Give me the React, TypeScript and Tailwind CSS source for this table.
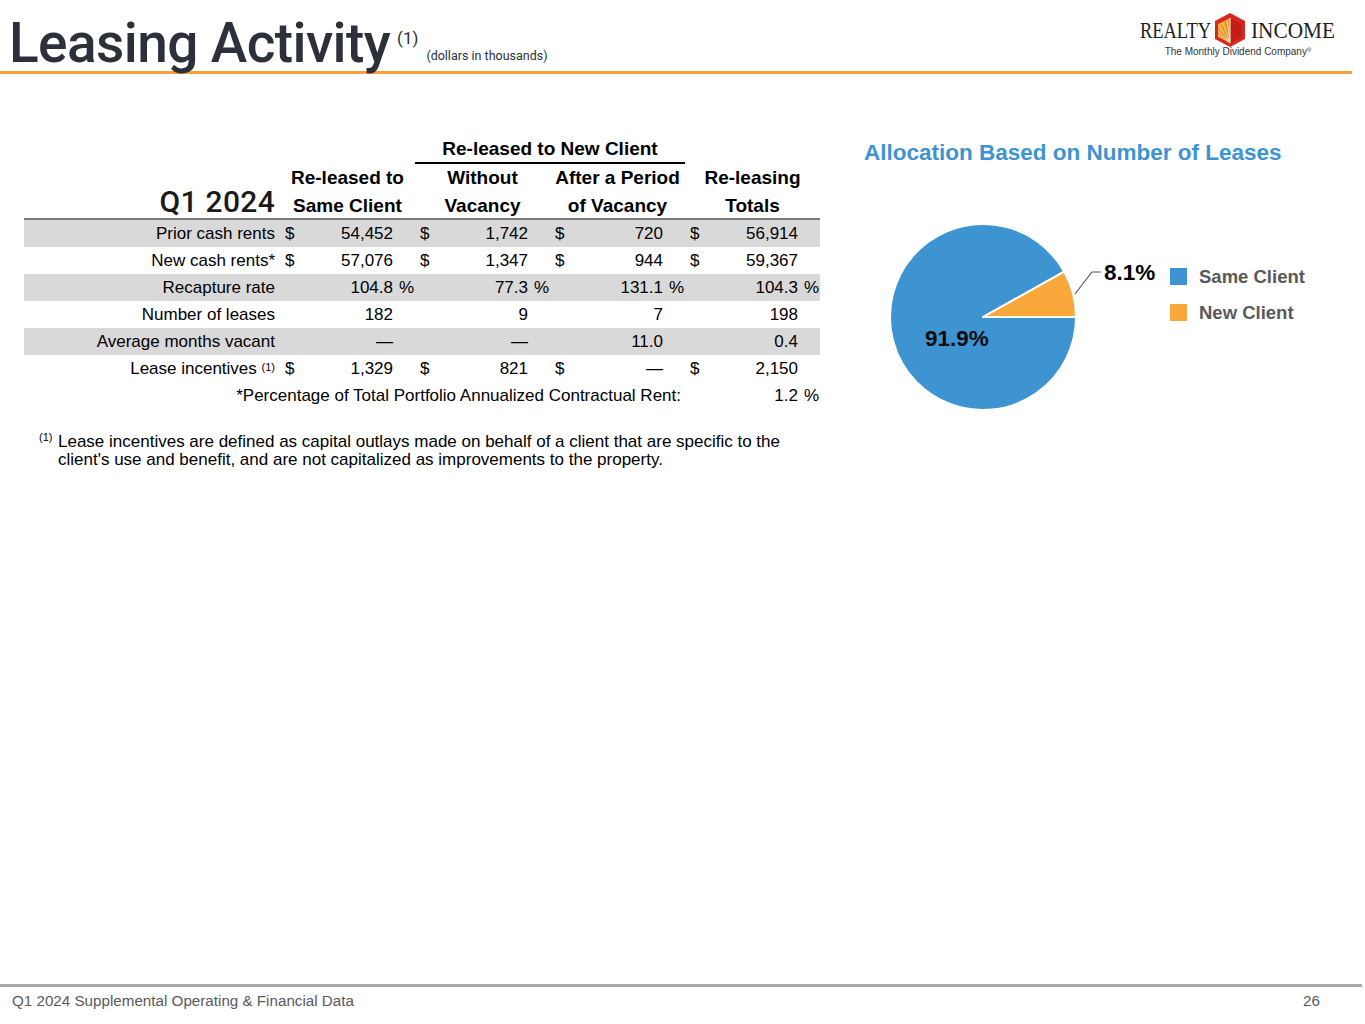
import React from "react"

const arial = "font-['Liberation_Sans',Arial,sans-serif]"

type Cell = [string, string, string?]
type Row = { label: React.ReactNode; cells: Cell[]; shade?: boolean }

const rows: Row[] = [
  {
    label: "Prior cash rents",
    cells: [["$", "54,452"], ["$", "1,742"], ["$", "720"], ["$", "56,914"]],
    shade: true,
  },
  {
    label: "New cash rents*",
    cells: [["$", "57,076"], ["$", "1,347"], ["$", "944"], ["$", "59,367"]],
  },
  {
    label: "Recapture rate",
    cells: [["", "104.8", "%"], ["", "77.3", "%"], ["", "131.1", "%"], ["", "104.3", "%"]],
    shade: true,
  },
  {
    label: "Number of leases",
    cells: [["", "182"], ["", "9"], ["", "7"], ["", "198"]],
  },
  {
    label: "Average months vacant",
    cells: [["", "—"], ["", "—"], ["", "11.0"], ["", "0.4"]],
    shade: true,
  },
  {
    label: (
      <>
        Lease incentives <sup className="text-[11px] relative -top-[3px]">(1)</sup>
      </>
    ),
    cells: [["$", "1,329"], ["$", "821"], ["$", "—"], ["$", "2,150"]],
  },
]

function DataCell({ cell }: { cell: Cell }) {
  const [cur, value, pct] = cell
  return (
    <div className="flex items-center h-full">
      <span className="w-[20px] pl-[5px]">{cur}</span>
      <span className="flex-1 text-right">{value}</span>
      <span className="w-[22px] pl-[6px]">{pct ?? ""}</span>
    </div>
  )
}

function Logo() {
  return (
    <div className="flex flex-col items-center pt-[12px]">
      <svg width="200" height="36" viewBox="0 0 200 36" overflow="visible">
        <text
          x="0"
          y="26"
          fontSize="23"
          fontFamily="'Liberation Serif', 'Times New Roman', serif"
          fill="#231f20"
          textLength="71"
          lengthAdjust="spacingAndGlyphs"
        >
          REALTY
        </text>
        <g transform="translate(74,1)">
          <defs>
            <linearGradient id="rays" x1="0" y1="0" x2="1" y2="1">
              <stop offset="0" stopColor="#f7b733" />
              <stop offset="1" stopColor="#ee6a1f" />
            </linearGradient>
          </defs>
          <polygon points="16,0 31,8 31,26 16,34 1,26 1,8" fill="#d7281f" />
          <polygon points="4,11 16,5 16,30 4,24" fill="url(#rays)" />
          <path d="M16 30 L5 13 M16 30 L4 18 M16 30 L4 22 M16 30 L9 10 M16 30 L13 7" stroke="#fde7a0" strokeWidth="0.9" />
          <polygon points="16,5 28,11 28,24 16,30" fill="#c41d17" />
          <path d="M16 5 L16 30" stroke="#fff" strokeWidth="1" />
        </g>
        <text
          x="111"
          y="26"
          fontSize="23"
          fontFamily="'Liberation Serif', 'Times New Roman', serif"
          fill="#231f20"
          textLength="84"
          lengthAdjust="spacingAndGlyphs"
        >
          INCOME
        </text>
      </svg>
      <div className={`${arial} text-[10px] leading-[12px] text-[#333] mt-[-2px] mr-[4px]`}>
        The Monthly Dividend Company<sup className="text-[6px]">®</sup>
      </div>
    </div>
  )
}

function PieChart() {
  const cx = 119
  const cy = 116
  const r = 93
  const ang = (8.1 / 100) * Math.PI * 2
  const px = cx + r * Math.cos(ang)
  const py = cy - r * Math.sin(ang)
  return (
    <svg width="300" height="230" viewBox="0 0 300 230">
      <path
        d={`M${cx} ${cy} L${px} ${py} A${r} ${r} 0 1 0 ${cx + r} ${cy} Z`}
        fill="#3d94d1"
        stroke="#fff"
        strokeWidth="2"
        strokeLinejoin="round"
      />
      <path
        d={`M${cx} ${cy} L${cx + r} ${cy} A${r} ${r} 0 0 0 ${px} ${py} Z`}
        fill="#f9a93b"
        stroke="#fff"
        strokeWidth="2"
        strokeLinejoin="round"
      />
      <polyline points="211,93 228,71 237,71" fill="none" stroke="#595959" strokeWidth="1.2" />
      <text x="240" y="79" fontSize="22.5" fontWeight="700" fontFamily="'Liberation Sans', Arial, sans-serif" fill="#000">
        8.1%
      </text>
      <text x="61" y="145" fontSize="22.5" fontWeight="700" fontFamily="'Liberation Sans', Arial, sans-serif" fill="#0d0d0d">
        91.9%
      </text>
    </svg>
  )
}

export default function App() {
  return (
    <div className="relative w-[1365px] h-[1024px] bg-white flex flex-col overflow-hidden">
      {/* header */}
      <div className="flex justify-between items-start h-[74px] border-b-[3px] border-[#f3a33a] mr-[13px]">
        <div className="flex items-start pl-[9px] pt-[16px] font-['Roboto',sans-serif] text-[#2b303b]">
          <span className="text-[55px] leading-none font-medium tracking-[-0.6px]">Leasing Activity</span>
          <span className="text-[17px] leading-none ml-[7px] mt-[14px]">(1)</span>
          <span className="text-[12.5px] leading-none ml-[8px] mt-[34px]">(dollars in thousands)</span>
        </div>
        <div className="pr-[12px]">
          <Logo />
        </div>
      </div>

      {/* body */}
      <div className="flex items-start pt-[62px]">
        <div className={`ml-[24px] w-[796px] ${arial} text-[17px] text-black`}>
          <div className="grid grid-cols-[256px_repeat(4,135px)] font-bold text-[19px]">
            <div className="col-start-3 col-span-2 text-center leading-[26px] border-b-2 border-black">
              Re-leased to New Client
            </div>
          </div>
          <div className="grid grid-cols-[256px_repeat(4,135px)] h-[56px] items-start font-bold text-[19px] leading-[28px] border-b-2 border-[#7a7a7a]">
            <div className="self-end text-right pr-[5px] font-['Roboto',sans-serif] font-medium text-[30px] leading-[34px] text-[#1a1a1a] pb-[1px] tracking-[0.3px]">
              Q1 2024
            </div>
            <div className="text-center">
              Re-leased to
              <br />
              Same Client
            </div>
            <div className="text-center">
              Without
              <br />
              Vacancy
            </div>
            <div className="text-center">
              After a Period
              <br />
              of Vacancy
            </div>
            <div className="text-center">
              Re-leasing
              <br />
              Totals
            </div>
          </div>
          {rows.map((row, i) => (
            <div
              key={i}
              className={`grid grid-cols-[256px_repeat(4,135px)] h-[27px] items-center ${row.shade ? "bg-[#d9d9d9]" : ""}`}
            >
              <div className="text-right pr-[5px] whitespace-nowrap">{row.label}</div>
              {row.cells.map((c, j) => (
                <DataCell key={j} cell={c} />
              ))}
            </div>
          ))}
          <div className="grid grid-cols-[661px_135px] h-[27px] items-center">
            <div className="text-right pr-[4px] whitespace-nowrap">
              *Percentage of Total Portfolio Annualized Contractual Rent:
            </div>
            <DataCell cell={["", "1.2", "%"]} />
          </div>

          <div className="flex mt-[24px] pl-[15px] text-[17px] leading-[18px]">
            <sup className="text-[11px] w-[19px] shrink-0 relative top-[4px]">(1)</sup>
            <p className="w-[735px]">
              Lease incentives are defined as capital outlays made on behalf of a client that are specific to the
              client's use and benefit, and are not capitalized as improvements to the property.
            </p>
          </div>
        </div>

        <div className={`ml-[44px] pt-[5px] ${arial}`}>
          <div className="text-[22.5px] leading-[24px] font-bold text-[#3d94d1] whitespace-nowrap">
            Allocation Based on Number of Leases
          </div>
          <div className="flex items-start mt-[36px]">
            <PieChart />
            <div className="ml-[6px] mt-[67px] flex flex-col gap-[19px] text-[18.5px] font-bold text-[#595959]">
              <div className="flex items-center gap-[12px] h-[17px]">
                <span className="w-[17px] h-[17px] bg-[#3d94d1]" />
                <span className="whitespace-nowrap">Same Client</span>
              </div>
              <div className="flex items-center gap-[12px] h-[17px]">
                <span className="w-[17px] h-[17px] bg-[#f9a93b]" />
                <span className="whitespace-nowrap">New Client</span>
              </div>
            </div>
          </div>
        </div>
      </div>

      {/* footer */}
      <div className={`mt-auto mr-[3px] border-t-[3px] border-[#a8a8a8] h-[40px] flex justify-between items-start pl-[12px] pr-[42px] ${arial} text-[15.2px] leading-[28px] text-[#5a5a5a]`}>
        <span>Q1 2024 Supplemental Operating &amp; Financial Data</span>
        <span>26</span>
      </div>
    </div>
  )
}
